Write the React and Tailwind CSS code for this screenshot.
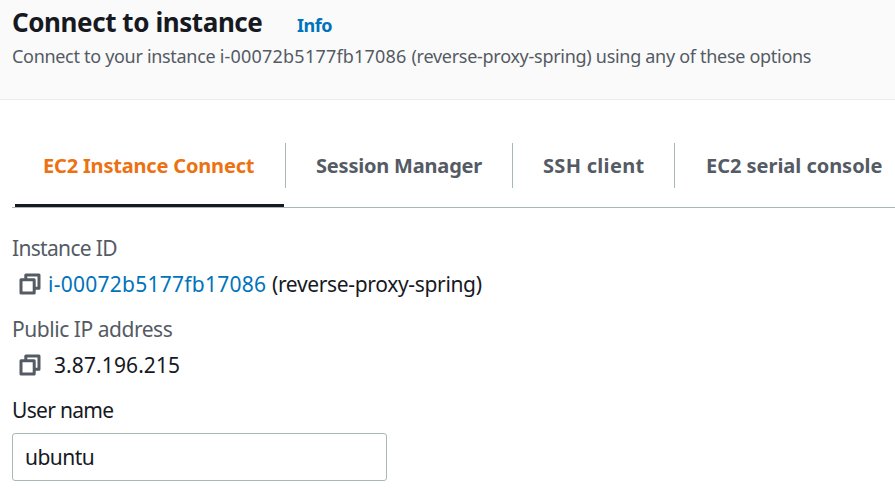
function CopyIcon() {
  return (
    <svg width="22" height="22" viewBox="0 0 22 22" fill="none" stroke="#545b64" strokeWidth="3" strokeLinejoin="round" className="mb-0.5 block shrink-0">
      <path d="M2 6.8h13.2v13.2h-13.2z" />
      <path d="M6.8 6.8v-4.8h13.2v13.2h-4.8" />
    </svg>
  );
}

export default function App() {
  return (
    <div className="h-[488px] w-[895px] overflow-hidden bg-white whitespace-nowrap font-['Noto_Sans',sans-serif] text-[#16191f]">
      <header className="h-[100px] border-b border-[#eaeded] bg-[#fafafa] pl-3">
        <div className="flex h-[41px] items-baseline pt-[3px]">
          <h1 className="w-[285px] text-[26px] leading-[38px] font-bold tracking-[-0.42px]">Connect to instance</h1>
          <a className="text-[18px] font-bold tracking-[-0.5px] text-[#0073bb]">Info</a>
        </div>
        <p className="pt-px text-[18px] leading-7 text-[#545b64]">
          <span className="tracking-[-0.31px]">Connect to your instance </span>
          <span className="tracking-[0.21px]">i-00072b5177fb17086 </span>
          <span className="tracking-[-0.28px]">(reverse-proxy-spring) </span>
          <span className="tracking-[-0.3px]">using any of these options</span>
        </p>
      </header>
      <nav className="ml-3 flex h-[108px] border-b border-[#aab7b8] pt-[43px] pl-[3px] text-[20px] font-bold text-[#545b64]">
        <div className="flex h-16 w-[269px] items-start border-b-3 border-[#16191f] pl-7 text-[#ec7211]">
          <span className="leading-[45px] tracking-[-0.18px]">EC2 Instance Connect</span>
        </div>
        <div className="ml-px h-[45px] w-[227px] border-l border-[#aab7b8] pl-[30px]">
          <span className="leading-[45px] tracking-[-0.2px]">Session Manager</span>
        </div>
        <div className="h-[45px] w-[162px] border-l border-[#aab7b8] pl-[30px]">
          <span className="leading-[45px] tracking-[0.3px]">SSH client</span>
        </div>
        <div className="h-[45px] border-l border-[#aab7b8] pl-[31px]">
          <span className="leading-[45px] tracking-[-0.03px]">EC2 serial console</span>
        </div>
      </nav>
      <main className="pt-[22px] pl-3 text-[21px]">
        <div className="h-9 leading-9 tracking-[-0.68px] text-[#545b64]">Instance ID</div>
        <div className="mt-px flex h-9 items-center pl-[7px]">
          <CopyIcon />
          <a className="w-[231px] pl-[7px] tracking-[0.26px] text-[#0073bb]">i-00072b5177fb17086</a>
          <span className="tracking-[-0.34px]">(reverse-proxy-spring)</span>
        </div>
        <div className="mt-2 h-9 leading-9 tracking-[-0.46px] text-[#545b64]">Public IP address</div>
        <div className="mt-px flex h-9 items-center pl-[7px]">
          <CopyIcon />
          <span className="pl-[13px] tracking-[0.1px]">3.87.196.215</span>
        </div>
        <label htmlFor="user-name" className="mt-2 block h-9 leading-9 tracking-[-0.7px]">User name</label>
        <input
          id="user-name"
          defaultValue="ubuntu"
          className="mt-[5px] block h-12 w-[375px] rounded-[3px] border border-[#aab7b8] bg-white px-3 tracking-[-0.55px] outline-none"
        />
      </main>
    </div>
  );
}
